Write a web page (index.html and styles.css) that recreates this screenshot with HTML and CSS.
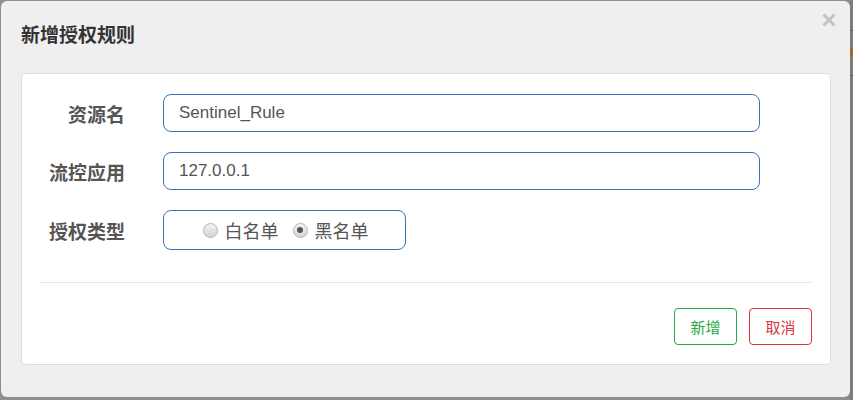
FILE: index.html
```html
<!DOCTYPE html>
<html lang="zh">
<head>
<meta charset="utf-8">
<title>新增授权规则</title>
<link rel="stylesheet" href="styles.css">
</head>
<body>
<div class="dialog">
  <div class="dialog-header">
    <h4 class="dialog-title">新增授权规则</h4>
    <span class="close" aria-label="close">
      <svg width="14" height="14" viewBox="0 0 14 14"><path d="M1.5 1.5 L12.5 12.5 M12.5 1.5 L1.5 12.5" stroke="#c2c2c2" stroke-width="3" stroke-linecap="butt"/></svg>
    </span>
  </div>
  <div class="panel">
    <div class="form">
      <div class="row">
        <label class="label">资源名</label>
        <div class="input">Sentinel_Rule</div>
      </div>
      <div class="row">
        <label class="label">流控应用</label>
        <div class="input">127.0.0.1</div>
      </div>
      <div class="row">
        <label class="label">授权类型</label>
        <div class="radio-box">
          <span class="radio"><span class="dot"></span></span><span class="radio-text">白名单</span>
          <span class="radio checked"><span class="dot"></span></span><span class="radio-text">黑名单</span>
        </div>
      </div>
    </div>
    <div class="divider"></div>
    <div class="footer">
      <button class="btn btn-green">新增</button>
      <button class="btn btn-red">取消</button>
    </div>
  </div>
</div>
<div class="peek">
  <span class="peek-line peek-blue1"></span>
  <span class="peek-line peek-orange"></span>
  <span class="peek-line peek-blue2"></span>
</div>
</body>
</html>
```

FILE: styles.css
```css
html, body {
  margin: 0;
  padding: 0;
}
body {
  width: 853px;
  height: 400px;
  background: #8e8e8e;
  display: flex;
  align-items: flex-start;
  overflow: hidden;
  font-family: "Liberation Sans", "Noto Sans CJK SC", sans-serif;
}
.dialog {
  margin: 1px 0 0 1px;
  width: 849px;
  height: 396px;
  background: #efefef;
  border-radius: 6px;
  display: flex;
  flex-direction: column;
}
.dialog-header {
  height: 72px;
  display: flex;
  justify-content: space-between;
  align-items: flex-start;
  padding: 0 14px 0 20px;
  box-sizing: border-box;
}
.dialog-title {
  margin: 21px 0 0;
  font-family: "Noto Sans CJK SC", sans-serif;
  font-size: 19px;
  line-height: 24px;
  font-weight: bold;
  color: #333;
}
.close {
  margin-top: 12px;
  width: 14px;
  height: 14px;
  display: block;
}
.close svg { display: block; }
.panel {
  margin: 0 19px 0 20px;
  height: 292px;
  box-sizing: border-box;
  background: #fff;
  border: 1px solid #dcdcdc;
  border-radius: 5px;
  padding: 20px 18px 19px;
  display: flex;
  flex-direction: column;
}
.form {
  display: flex;
  flex-direction: column;
  gap: 20px;
}
.row {
  display: flex;
  align-items: center;
}
.label {
  width: 85px;
  margin-right: 38px;
  text-align: right;
  font-family: "Noto Sans CJK SC", sans-serif;
  font-weight: bold;
  font-size: 19px;
  color: #555;
}
.input {
  width: 597px;
  height: 38px;
  box-sizing: border-box;
  border: 1px solid #3574b6;
  border-radius: 8px;
  padding: 0 15px;
  display: flex;
  align-items: center;
  font-size: 17px;
  color: #555;
}
.radio-box {
  width: 243px;
  height: 40px;
  box-sizing: border-box;
  border: 1px solid #3574b6;
  border-radius: 8px;
  display: flex;
  align-items: center;
  justify-content: center;
  padding-left: 2px;
}
.radio {
  width: 13px;
  height: 13px;
  border-radius: 50%;
  border: 1px solid #b4b4b4;
  background: linear-gradient(#f4f4f4, #d4d4d4);
  display: flex;
  align-items: center;
  justify-content: center;
  margin-right: 7px;
}
.radio .dot {
  display: none;
  width: 6px;
  height: 6px;
  border-radius: 50%;
  background: #555;
}
.radio.checked .dot { display: block; }
.radio-text {
  font-family: "Noto Sans CJK SC", sans-serif;
  font-size: 18px;
  color: #555;
  margin-right: 14px;
}
.radio-text:last-child { margin-right: 0; }
.divider {
  margin-top: 32px;
  height: 1px;
  background: #e6e6e6;
}
.footer {
  margin-top: 25px;
  display: flex;
  justify-content: flex-end;
  gap: 12px;
}
.btn {
  width: 63px;
  height: 37px;
  border-radius: 4px;
  background: #fff;
  font-family: "Noto Sans CJK SC", sans-serif;
  font-size: 15px;
  padding: 0;
  cursor: pointer;
}
.btn-green {
  border: 1px solid #28a745;
  color: #28a745;
}
.btn-red {
  border: 1px solid #dc3545;
  color: #dc3545;
}
.peek {
  width: 3px;
  height: 400px;
  background: #7c7c7c;
  display: flex;
  flex-direction: column;
}
.peek-line {
  display: block;
  width: 3px;
}
.peek-blue1 {
  margin-top: 30px;
  height: 1px;
  background: #3d6390;
}
.peek-orange {
  margin-top: 17px;
  height: 9px;
  background: #a06a2a;
}
.peek-blue2 {
  margin-top: 18px;
  height: 1px;
  background: #3d6390;
}
```
